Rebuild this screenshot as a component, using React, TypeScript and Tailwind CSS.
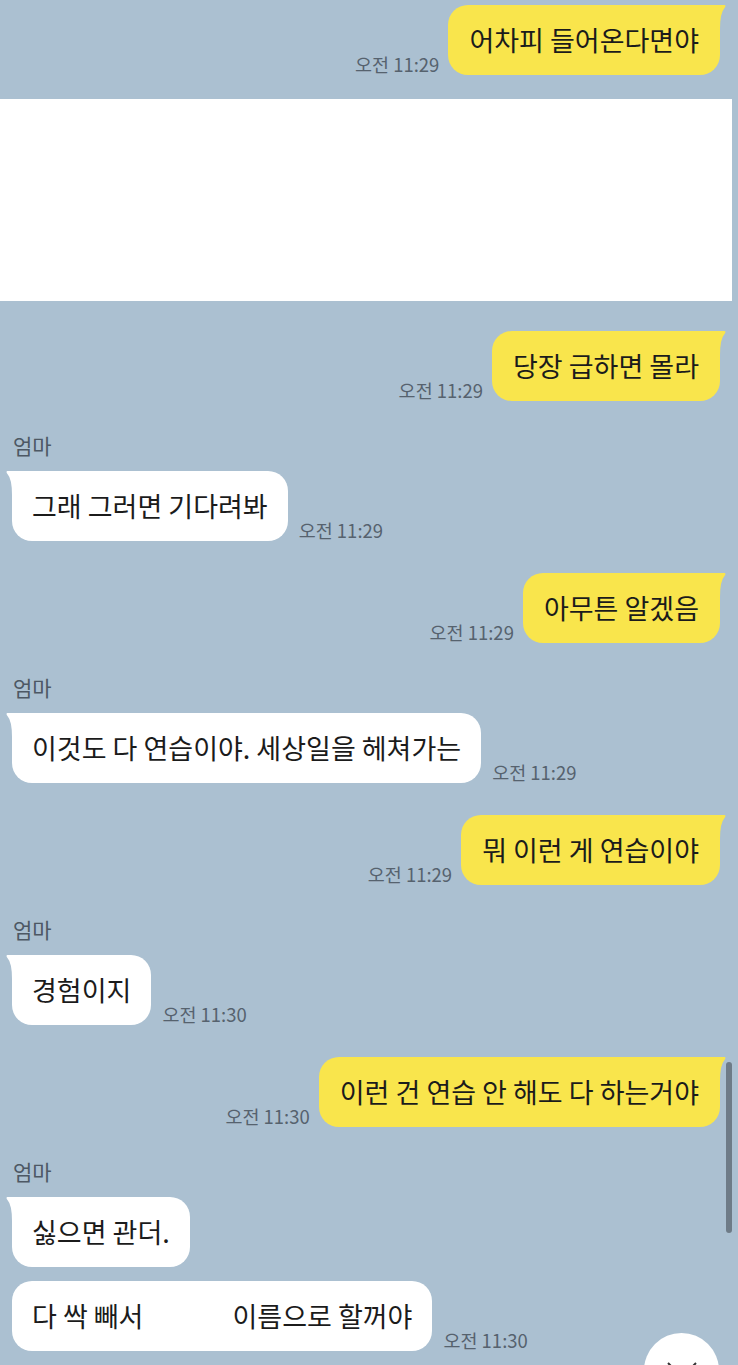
import React from "react";

const FONT = '"Noto Sans CJK KR", "Noto Sans", sans-serif';

function YellowTail() {
  return (
    <svg
      className="absolute top-0 right-[-6px]"
      width="30"
      height="24"
      viewBox="0 0 30 24"
    >
      <path d="M0 0 L27 0 Q31 -0.5 28.5 3 Q24 8 24 24 L0 24 Z" fill="#f9e54c" />
    </svg>
  );
}

function WhiteTail() {
  return (
    <svg
      className="absolute top-0 left-[-6px]"
      width="30"
      height="24"
      viewBox="0 0 30 24"
    >
      <path d="M30 0 L3 0 Q-1 -0.5 1.5 3 Q6 8 6 24 L30 24 Z" fill="#ffffff" />
    </svg>
  );
}

function Time({ t }: { t: string }) {
  return (
    <span className="text-[18.5px] leading-none text-[#56626e] mb-[2px] whitespace-nowrap">
      {t}
    </span>
  );
}

function Mine({ text, time, mt }: { text: string; time: string; mt: string }) {
  return (
    <div className={`flex justify-end items-end pr-[18px] gap-[9px] ${mt}`}>
      <Time t={time} />
      <div className="relative h-[70px] flex items-center rounded-[20px] bg-[#f9e54c] px-[21px] text-[27px] text-[#1b1b1b] whitespace-nowrap">
        <YellowTail />
        <span className="relative">{text}</span>
      </div>
    </div>
  );
}

function Other({
  children,
  time,
  mt,
  tail,
}: {
  children: React.ReactNode;
  time?: string;
  mt: string;
  tail?: boolean;
}) {
  return (
    <div className={`flex justify-start items-end pl-[12px] gap-[11px] ${mt}`}>
      <div className="relative h-[70px] flex items-center rounded-[20px] bg-white px-[20px] text-[27px] text-[#1b1b1b] whitespace-nowrap">
        {tail && <WhiteTail />}
        <span className="relative flex items-center">{children}</span>
      </div>
      {time && <Time t={time} />}
    </div>
  );
}

function Name({ mt }: { mt: string }) {
  return (
    <div className={`pl-[13px] text-[21px] leading-[26px] text-[#4d5864] ${mt}`}>
      엄마
    </div>
  );
}

export default function App() {
  return (
    <div
      className="relative w-[738px] h-[1365px] overflow-hidden bg-[#abc0d1] flex flex-col"
      style={{ fontFamily: FONT }}
    >
      <Mine text="어차피 들어온다면야" time="오전 11:29" mt="mt-[5px]" />
      <div className="mt-[24px] w-[732px] h-[202px] bg-white shrink-0" />
      <Mine text="당장 급하면 몰라" time="오전 11:29" mt="mt-[30px]" />

      <Name mt="mt-[31px]" />
      <Other time="오전 11:29" mt="mt-[13px]" tail>
        그래 그러면 기다려봐
      </Other>

      <Mine text="아무튼 알겠음" time="오전 11:29" mt="mt-[32px]" />

      <Name mt="mt-[31px]" />
      <Other time="오전 11:29" mt="mt-[13px]" tail>
        이것도 다 연습이야. 세상일을 헤쳐가는
      </Other>

      <Mine text="뭐 이런 게 연습이야" time="오전 11:29" mt="mt-[32px]" />

      <Name mt="mt-[31px]" />
      <Other time="오전 11:30" mt="mt-[13px]" tail>
        경험이지
      </Other>

      <Mine text="이런 건 연습 안 해도 다 하는거야" time="오전 11:30" mt="mt-[32px]" />

      <Name mt="mt-[31px]" />
      <Other mt="mt-[13px]" tail>
        싫으면 관더.
      </Other>
      <Other time="오전 11:30" mt="mt-[14px]">
        <span>다 싹 빼서</span>
        <span className="inline-block w-[89px]" />
        <span>이름으로 할꺼야</span>
      </Other>

      {/* scrollbar */}
      <div className="absolute left-[726px] top-[1062px] w-[6px] h-[171px] rounded-full bg-[#6e7b87]" />

      {/* scroll-down button */}
      <div className="absolute left-[644px] top-[1333px] w-[75px] h-[75px] rounded-full bg-white flex justify-center pt-[29px]">
        <svg width="30" height="18" viewBox="0 0 30 18">
          <path d="M1 1 L15 15 L29 1" stroke="#333" strokeWidth="2" fill="none" />
        </svg>
      </div>
    </div>
  );
}
